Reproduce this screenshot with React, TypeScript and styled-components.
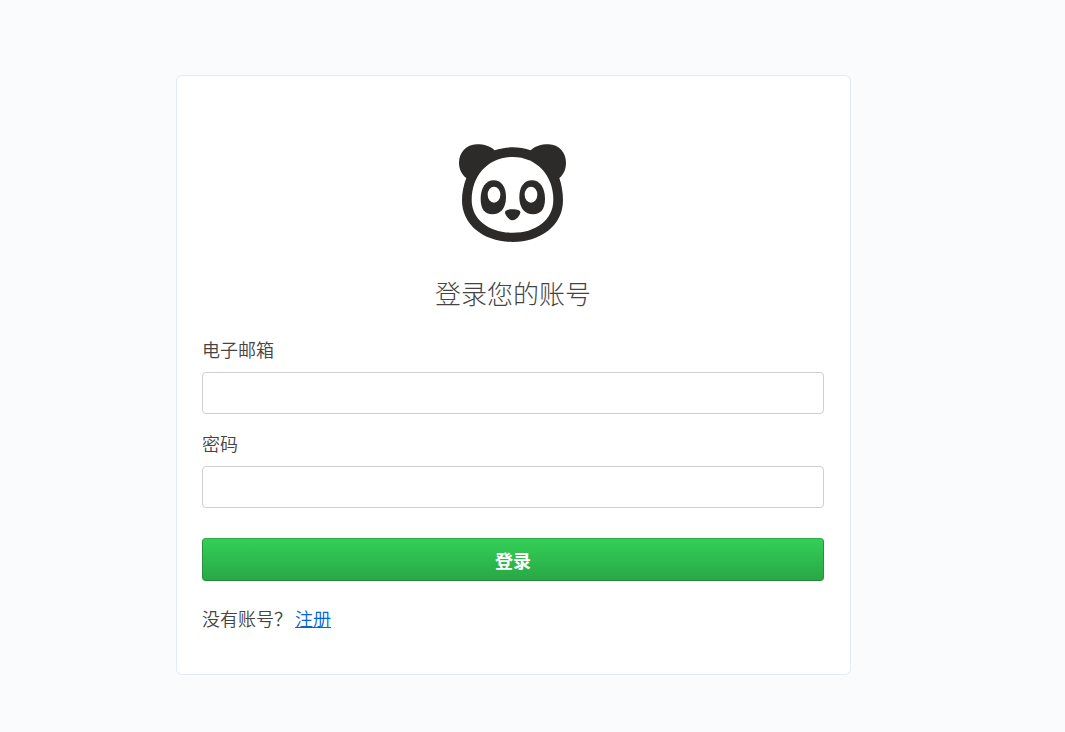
import React from "react";
import styled, { createGlobalStyle } from "styled-components";

const GlobalStyle = createGlobalStyle`
  *, *::before, *::after {
    box-sizing: border-box;
  }
  body {
    margin: 0;
    background: #fafbfd;
    color: #444;
    font-family: "Noto Sans CJK SC", sans-serif;
    font-size: 18px;
    line-height: 26px;
  }
`;

const Page = styled.main`
  display: flex;
  justify-content: center;
  min-height: 100vh;
  padding: 75px 38px 57px 0;
`;

const Card = styled.section`
  display: flex;
  flex-direction: column;
  width: 100%;
  max-width: 675px;
  padding: 68px 26px 43px 25px;
  background: #fff;
  border: 1px solid #e2eaf3;
  border-radius: 6px;
`;

const Logo = styled.svg`
  align-self: center;
  width: 108px;
  height: 98px;
`;

const Title = styled.h1`
  margin: 31px 0 23px;
  font-size: 26px;
  font-weight: 300;
  line-height: 40px;
  text-align: center;
`;

const Form = styled.form`
  display: flex;
  flex-direction: column;
  gap: 16px;
`;

const Field = styled.div`
  display: flex;
  flex-direction: column;
  gap: 10px;
`;

const Label = styled.label`
  font-weight: 350;
`;

const Input = styled.input`
  width: 100%;
  height: 42px;
  padding: 0 10px;
  background: #fff;
  border: 1px solid #cdcfd6;
  border-radius: 4px;
  color: inherit;
  font: inherit;
`;

const SubmitButton = styled.button`
  height: 43px;
  margin-top: 14px;
  padding: 0 10px;
  background: linear-gradient(#34d058, #28a745) border-box;
  border: 1px solid;
  border-color: #2aae4a #25913e #22863a;
  border-radius: 4px;
  color: #fff;
  cursor: pointer;
  font: inherit;
  font-weight: 700;
`;

const Footer = styled.p`
  display: flex;
  gap: 3px;
  margin: 24px 0 0;
  font-weight: 350;
`;

const Link = styled.a`
  color: #0366d6;
`;

function PandaLogo() {
  return (
    <Logo viewBox="27 26 324 294" role="img" aria-label="Panda">
      <path
        fill="#2c2b2a"
        d="M134 45 C151 39 169 36 188 36 C207 36 225 39 242 45 C256 32 272 27 296 27 C327 27 348 52 348 82 C348 101 341 117 328 128 C335 149 339 172 339 195 C339 270 273 320 188 320 C103 320 36 270 36 195 C36 172 41 149 49 128 C35 117 27 101 27 82 C27 52 49 27 80 27 C104 27 120 32 134 45 Z"
      />
      <path
        fill="#fff"
        d="M188 65 C115 65 65 121 65 193 C65 253 117 292 188 292 C258 292 310 253 310 193 C310 121 260 65 188 65 Z"
      />
      <g fill="#2c2b2a">
        <path d="M131 135 C108 135 92 157 92 191 C92 221 104 237 127 237 C151 237 168 219 168 186 C168 153 153 135 131 135 Z" />
        <path d="M246 135 C223 135 208 153 208 186 C208 219 225 237 249 237 C272 237 285 221 285 191 C285 157 269 135 246 135 Z" />
        <path d="M188 222 C202 222 211 225 211 231 C211 240 198 255 188 255 C178 255 165 240 165 231 C165 225 174 222 188 222 Z" />
      </g>
      <g fill="#fff">
        <ellipse cx="132" cy="178" rx="19" ry="24" />
        <ellipse cx="243" cy="178" rx="19" ry="24" />
      </g>
    </Logo>
  );
}

export default function App() {
  return (
    <>
      <GlobalStyle />
      <Page>
        <Card>
          <PandaLogo />
          <Title>登录您的账号</Title>
          <Form onSubmit={(event: React.FormEvent) => event.preventDefault()}>
            <Field>
              <Label htmlFor="email">电子邮箱</Label>
              <Input id="email" type="email" autoComplete="email" />
            </Field>
            <Field>
              <Label htmlFor="password">密码</Label>
              <Input id="password" type="password" autoComplete="current-password" />
            </Field>
            <SubmitButton type="submit">登录</SubmitButton>
          </Form>
          <Footer>
            <span>没有账号？</span>
            <Link href="#register">注册</Link>
          </Footer>
        </Card>
      </Page>
    </>
  );
}
